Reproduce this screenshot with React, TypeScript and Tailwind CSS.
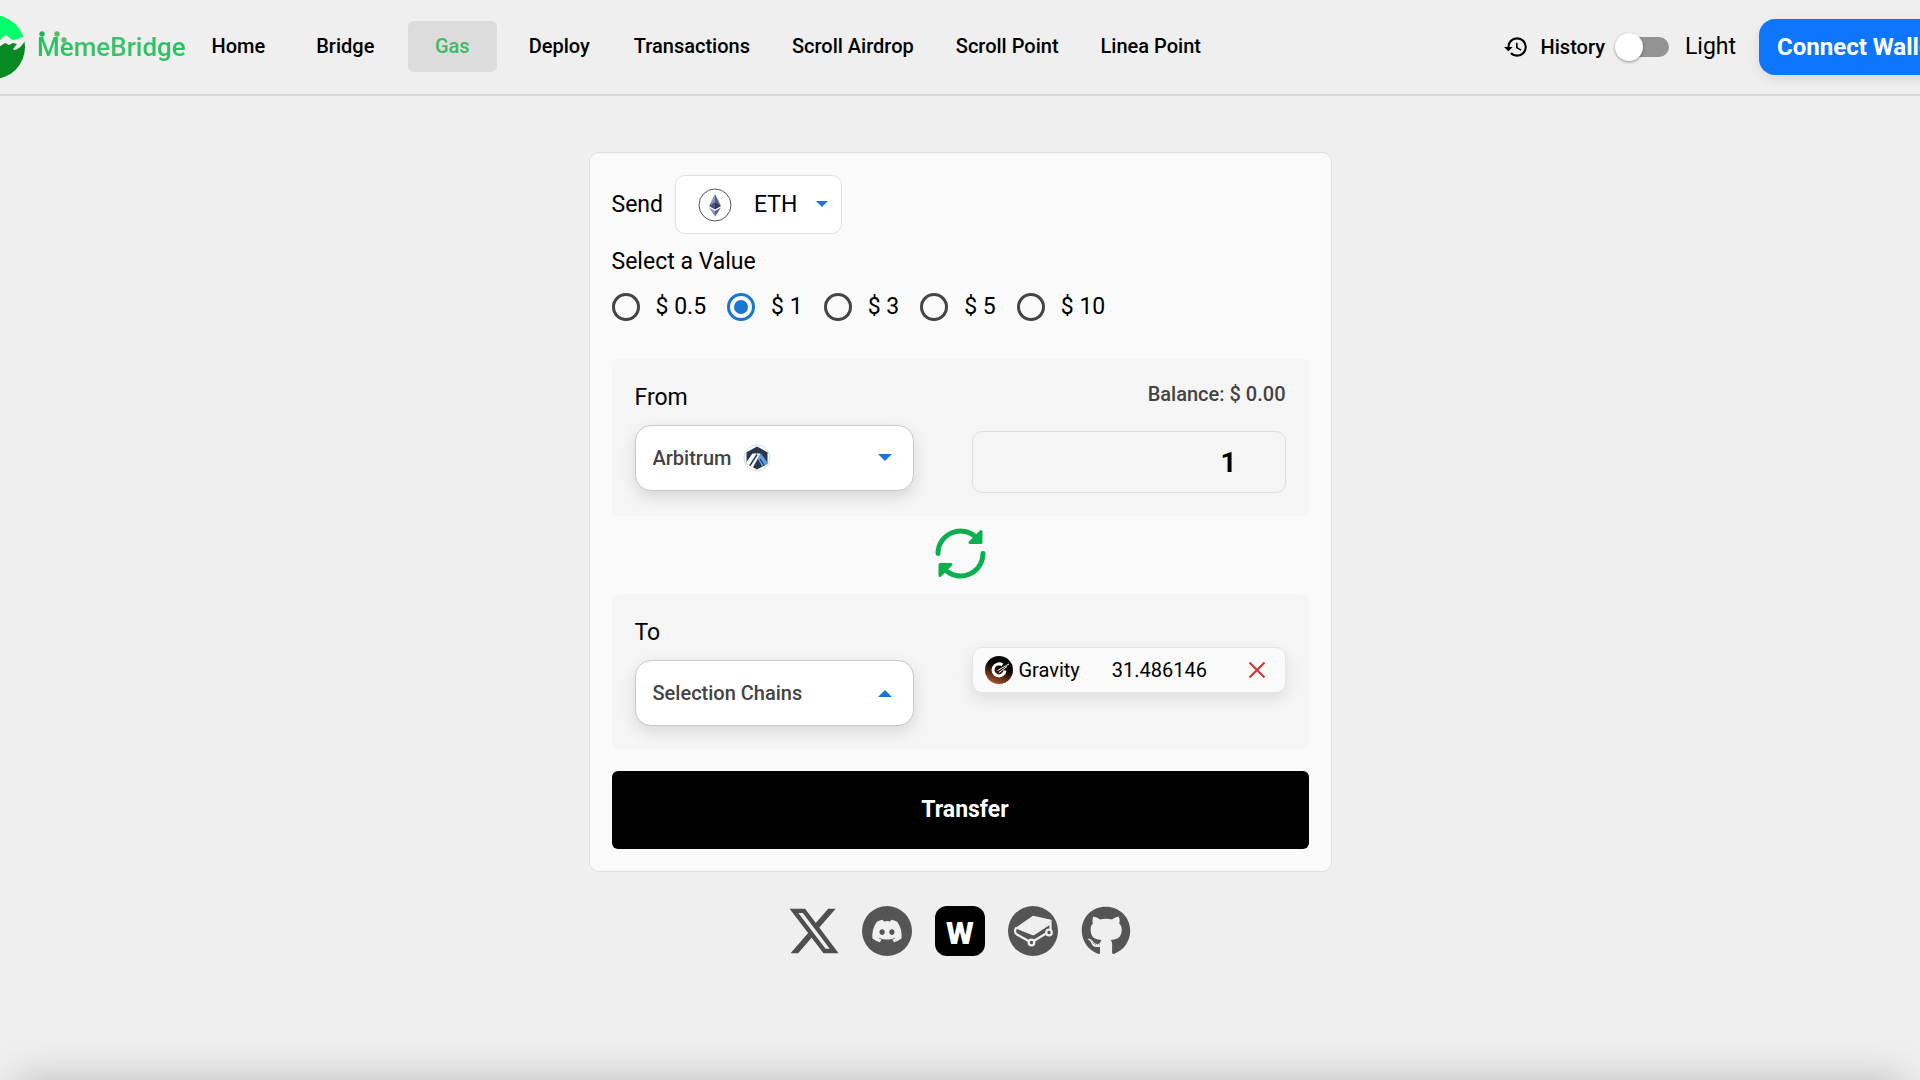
import { useState, type ReactNode } from 'react';
import { FaDiscord, FaGithub } from 'react-icons/fa';
import { MdHistory } from 'react-icons/md';

const navItems = [
    'Home',
    'Bridge',
    'Gas',
    'Deploy',
    'Transactions',
    'Scroll Airdrop',
    'Scroll Point',
    'Linea Point',
];

const values = ['0.5', '1', '3', '5', '10'];

function LogoIcon() {
    return (
        <svg viewBox="0 0 64 64" className="size-16 shrink-0">
            <defs>
                <clipPath id="logo-circle">
                    <circle cx="32" cy="32" r="32" />
                </clipPath>
            </defs>
            <g clipPath="url(#logo-circle)">
                <rect width="64" height="64" fill="#efefef" />
                <path
                    d="M0 0h64v21l-7 3-5 1c-3-1-5-4-7-5-3 1-5 5-7 6l-10 6L0 40Z"
                    fill="#00ff6a"
                />
                <path
                    d="M0 44l22-6 13-4 9-6 4 2 4-2 4 1-4 5 1 1c6-1 8-5 11-9v38H0Z"
                    fill="#088a22"
                />
            </g>
        </svg>
    );
}

function EthIcon() {
    return (
        <svg viewBox="0 0 34 34" className="size-[34px]">
            <circle cx="17" cy="17" r="16" fill="#fff" stroke="#55556a" />
            <path d="M17 6v8.500l-6 3.500Z" fill="#8a8fb8" />
            <path d="M17 6v8.500l6 3.500Z" fill="#5c5c88" />
            <path d="M17 14v7.500l-6-3.500Z" fill="#4e4f7c" />
            <path d="M17 14v7.500l6-3.500Z" fill="#35355c" />
            <path d="M11 19.500l6 3.500v5.500Z" fill="#8a8fb8" />
            <path d="M23 19.500l-6 3.500v5.500Z" fill="#5c5c88" />
        </svg>
    );
}

function ArbitrumIcon() {
    return (
        <svg viewBox="0 0 28 28" className="size-7">
            <defs>
                <clipPath id="arbitrum-hex">
                    <path d="M14 2.500l10.500 5.800v11.400L14 25.500 3.500 19.700V8.300Z" />
                </clipPath>
            </defs>
            <circle cx="14" cy="14" r="13" fill="#fff" stroke="#cfdbe8" />
            <g clipPath="url(#arbitrum-hex)">
                <rect width="28" height="28" fill="#2d374b" />
                <path d="M14.500 14.500L18 9.500l10 14-6 4Z" fill="#5b9fe8" />
                <path d="M0 23L9.500 9.500h8L8 27Z" fill="#fff" />
                <path d="M6 23L14 10.500" stroke="#2d374b" strokeWidth="1.500" />
                <path d="M17 15l5.500 8.500" stroke="#2d374b" strokeWidth="1.200" />
            </g>
        </svg>
    );
}

function GravityIcon() {
    return (
        <svg viewBox="0 0 28 28" className="size-7 shrink-0">
            <defs>
                <linearGradient id="gravity" x1="0.700" y1="0" x2="0.300" y2="1">
                    <stop offset="0.400" stopColor="#050505" />
                    <stop offset="1" stopColor="#b4542a" />
                </linearGradient>
            </defs>
            <circle cx="14" cy="14" r="14" fill="url(#gravity)" />
            <path
                d="M17.500 9a6 6 0 1 0 2.500 5.500"
                fill="none"
                stroke="#fff"
                strokeWidth="3"
            />
            <path d="M12.500 14.500L24 8M14 16.500l8-6" stroke="#fff" strokeWidth="1" />
        </svg>
    );
}

function RefreshIcon() {
    return (
        <svg viewBox="0 0 51 51" className="size-[51px]" fill="#0bb04e" stroke="#0bb04e">
            <g strokeLinejoin="round" strokeLinecap="round">
                <path
                    d="M3 25.500A22.500 22.500 0 0 1 41.500 9.700"
                    fill="none"
                    strokeWidth="5"
                />
                <path d="M46 3.500v11H35Z" strokeWidth="3" />
                <path
                    d="M48 25.500A22.500 22.500 0 0 1 9.500 41.300"
                    fill="none"
                    strokeWidth="5"
                />
                <path d="M5 47.500v-11h11Z" strokeWidth="3" />
            </g>
        </svg>
    );
}

function XIcon() {
    return (
        <svg viewBox="1 2 22 20" className="size-[50px]" fill="#4f4f4f">
            <path d="M18.244 2.250h3.308l-7.227 8.260 8.502 11.240H16.170l-5.214-6.817L4.990 21.750H1.680l7.730-8.835L1.254 2.250H8.080l4.713 6.231zm-1.161 17.520h1.833L7.084 4.126H5.117z" />
        </svg>
    );
}

function GitbookIcon() {
    return (
        <svg viewBox="0 0 50 50" className="size-[50px]">
            <circle cx="25" cy="25" r="25" fill="#555" />
            <path
                d="M25 10.500L43 14.500 25 28.500 8.500 22Z"
                fill="#efefef"
                stroke="#efefef"
                strokeWidth="1.500"
                strokeLinejoin="round"
            />
            <g fill="none" stroke="#efefef" strokeWidth="2.200">
                <path d="M8.500 21.500c-2 2-2 5.500.5 7l11.500 6.500M26.500 34.500L38 27.500" />
                <path d="M25 28.500L42.500 17v7" />
                <circle cx="23.500" cy="36.500" r="2.800" />
                <circle cx="41" cy="26.500" r="2.800" />
            </g>
        </svg>
    );
}

function Caret({ up = false, small = false }: { up?: boolean; small?: boolean }) {
    return (
        <svg
            viewBox="0 0 14 8"
            className={small ? 'h-[7px] w-3' : 'h-2 w-3.5'}
            fill="#1976d2"
        >
            <path d={up ? 'M0 8L7 1l7 7Z' : 'M0 0h14L7 7Z'} />
        </svg>
    );
}

function ChainPanel({
    id,
    label,
    option,
    icon,
    open,
    children,
}: {
    id: string;
    label: string;
    option: string;
    icon?: ReactNode;
    open?: boolean;
    children: ReactNode;
}) {
    return (
        <section className="flex justify-between rounded-md bg-[#f5f5f5] px-[23px] pb-[23px]">
            <div className="w-[279px] pt-[22px]">
                <label htmlFor={id} className="block leading-[34px]">
                    {label}
                </label>
                <div className="relative mt-2.5">
                    <select
                        id={id}
                        className="h-[66px] w-full appearance-none rounded-2xl border border-[#c8c8c8] bg-white px-[17px] text-xl font-medium text-[#444] shadow-[0_6px_16px_rgba(0,0,0,0.12)]"
                    >
                        <option>{option}</option>
                    </select>
                    <span className="pointer-events-none absolute inset-y-0 left-[108px] flex items-center">
                        {icon}
                    </span>
                    <span className="pointer-events-none absolute inset-y-0 right-[22px] flex items-center">
                        <Caret up={open} />
                    </span>
                </div>
            </div>
            <div className="w-[314px]">{children}</div>
        </section>
    );
}

function Header() {
    return (
        <header className="flex h-24 items-center overflow-hidden border-b-2 border-[#d9d9d9]">
            <a href="#" className="-ml-[39px] flex shrink-0 items-center">
                <LogoIcon />
                <span className="relative ml-3 bg-linear-to-r from-[#1fc45c] via-[#3dbf6c] to-[#1fc45c] bg-clip-text text-[26px] font-medium leading-8 text-transparent">
                    MemeBridge
                    <svg viewBox="0 0 28 12" className="absolute top-0 left-0.5 h-3 w-7">
                        <circle cx="3" cy="3" r="2.700" fill="#22b45a" />
                        <circle cx="18" cy="3" r="2.700" fill="#5aba62" />
                        <circle cx="25" cy="9" r="2.700" fill="#5aba7a" />
                    </svg>
                </span>
            </a>
            <nav className="mb-0.5 ml-2 flex shrink-0 gap-[18px] text-xl font-medium">
                {navItems.map((item) => (
                    <a
                        key={item}
                        href="#"
                        className={
                            item === 'Gas'
                                ? 'flex h-[51px] min-w-[89px] items-center justify-center rounded-md bg-[#dcdcdc] px-3 text-[#3aba6a]'
                                : 'flex h-[51px] min-w-[89px] items-center justify-center rounded-md px-3'
                        }
                    >
                        {item}
                    </a>
                ))}
            </nav>
            <div className="-mr-[38px] ml-auto flex shrink-0 items-center">
                <a href="#" className="flex items-center gap-3 text-xl font-medium">
                    <MdHistory className="size-[26px]" />
                    History
                </a>
                <label className="ml-2.5 flex items-center gap-4 text-[23px]">
                    <input
                        type="checkbox"
                        role="switch"
                        className="relative ml-2 h-5 w-[46px] appearance-none rounded-full bg-[#939393] before:absolute before:-left-2 before:-top-1 before:size-7 before:rounded-full before:bg-white before:shadow-[0_1px_3px_rgba(0,0,0,0.4)]"
                    />
                    Light
                </label>
                <button className="ml-[23px] h-14 rounded-2xl bg-[#0e76fd] px-[18px] text-2xl font-bold text-white shadow-[0_4px_12px_rgba(0,0,0,0.1)]">
                    Connect Wallet
                </button>
            </div>
        </header>
    );
}

function TransferCard() {
    const [value, setValue] = useState('1');

    return (
        <main className="mx-auto mt-14 w-[743px] max-w-full rounded-[10px] border border-[#e0e0e0] bg-[#fafafa] p-[22px] text-[23px]">
            <div className="flex items-center gap-3">
                <label htmlFor="token" className="pt-0.5">
                    Send
                </label>
                <div className="relative">
                    <select
                        id="token"
                        className="h-[59px] w-[167px] appearance-none rounded-[10px] border border-[#e0e0e0] bg-white pt-0.5 pl-[78px]"
                    >
                        <option>ETH</option>
                    </select>
                    <span className="pointer-events-none absolute inset-y-0 left-[23px] flex items-center">
                        <EthIcon />
                    </span>
                    <span className="pointer-events-none absolute inset-y-0 right-3.5 flex items-center">
                        <Caret small />
                    </span>
                </div>
            </div>

            <fieldset className="mt-3">
                <legend className="leading-8">Select a Value</legend>
                <div className="mt-[13px] flex gap-[21px]">
                    {values.map((item) => (
                        <label key={item} className="flex items-center gap-4 leading-8">
                            <input
                                type="radio"
                                name="value"
                                checked={value === item}
                                onChange={() => setValue(item)}
                                className="size-7 appearance-none rounded-full border-3 border-[#444] checked:border-[#1976d2] checked:bg-[#1976d2] checked:bg-clip-content checked:p-1"
                            />
                            $ {item}
                        </label>
                    ))}
                </div>
            </fieldset>

            <div className="mt-9">
                <ChainPanel
                    id="from"
                    label="From"
                    option="Arbitrum"
                    icon={<ArbitrumIcon />}
                >
                    <div className="pt-[21px] text-right text-xl font-medium text-[#444]">
                        Balance: $ 0.00
                    </div>
                    <input
                        type="text"
                        aria-label="Amount"
                        value={value}
                        onChange={(e) => setValue(e.target.value)}
                        className="mt-[23px] h-[62px] w-full rounded-[10px] border border-[#dfdfdf] bg-[#f5f5f5] pr-12 text-right text-[28px] font-bold"
                    />
                </ChainPanel>

                <div className="flex h-[78px] items-center justify-center pb-1">
                    <button aria-label="Swap chains">
                        <RefreshIcon />
                    </button>
                </div>

                <ChainPanel id="to" label="To" option="Selection Chains" open>
                    <div className="mt-[53px] flex h-[46px] items-center rounded-[10px] border border-[#e4e4e4] bg-[#fafafa] px-3 text-xl shadow-[0_6px_16px_rgba(0,0,0,0.1)]">
                        <GravityIcon />
                        <span className="ml-1.5">Gravity</span>
                        <span className="ml-8">31.486146</span>
                        <button aria-label="Remove Gravity" className="ml-auto mr-2">
                            <svg viewBox="0 0 16 16" className="size-4" stroke="#d32f2f" strokeWidth="2">
                                <path d="M0.500 0.500l15 15M15.500 0.500l-15 15" />
                            </svg>
                        </button>
                    </div>
                </ChainPanel>
            </div>

            <button className="mt-[22px] h-[78px] w-full rounded-md bg-black pl-2.5 font-bold text-white">
                Transfer
            </button>
        </main>
    );
}

function SocialLinks() {
    return (
        <footer className="mt-[34px] flex justify-center gap-[23px]">
            <a href="#" aria-label="X">
                <XIcon />
            </a>
            <a
                href="#"
                aria-label="Discord"
                className="flex size-[50px] items-center justify-center rounded-full bg-[#555]"
            >
                <FaDiscord className="size-8 text-[#efefef]" />
            </a>
            <a
                href="#"
                className="flex size-[50px] items-center justify-center rounded-xl bg-black pt-1 text-[32px] font-black text-white"
            >
                W
            </a>
            <a href="#" aria-label="GitBook">
                <GitbookIcon />
            </a>
            <a href="#" aria-label="GitHub">
                <FaGithub className="size-[50px] text-[#555]" />
            </a>
        </footer>
    );
}

export default function App() {
    return (
        <div className="min-h-screen overflow-hidden bg-[#efefef] font-[Roboto,sans-serif] text-black">
            <Header />
            <TransferCard />
            <SocialLinks />
            <div className="pointer-events-none fixed inset-x-4 -bottom-40 h-40 shadow-[0_0_40px_rgba(0,0,0,0.22)]" />
        </div>
    );
}
